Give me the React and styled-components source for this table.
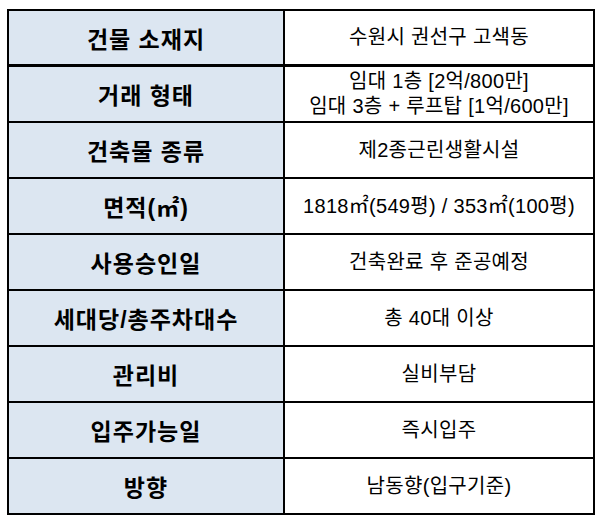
import React from "react";
import styled, { createGlobalStyle } from "styled-components";

const Global = createGlobalStyle`
  html, body { margin: 0; padding: 0; background: #ffffff; }
  body { font-family: "Liberation Sans", "Noto Sans CJK KR", sans-serif; color: #000; }
`;

const Page = styled.div`
  padding: 9px 0 0 7px;
`;

const Table = styled.div`
  display: grid;
  grid-template-columns: 274px 308px;
  grid-auto-rows: 54px;
  gap: 2px;
  padding: 2px;
  width: 584px;
  background: #000;
  & > :nth-child(-n + 2) { height: 53px; }
`;

const Head = styled.div`
  background: #dce6f1;
  display: flex;
  align-items: center;
  justify-content: center;
  font-weight: 700;
  font-size: 23px;
  letter-spacing: 1px;
`;

const Value = styled.div`
  background: #ffffff;
  display: flex;
  flex-direction: column;
  align-items: center;
  justify-content: center;
  font-size: 20px;
  line-height: 25px;
  letter-spacing: 0.3px;
  text-align: center;
`;

const rows = [
  ["건물 소재지", ["수원시 권선구 고색동"]],
  ["거래 형태", ["임대 1층 [2억/800만]", "임대 3층 + 루프탑 [1억/600만]"]],
  ["건축물 종류", ["제2종근린생활시설"]],
  ["면적(㎡)", ["1818㎡(549평) / 353㎡(100평)"]],
  ["사용승인일", ["건축완료 후 준공예정"]],
  ["세대당/총주차대수", ["총 40대 이상"]],
  ["관리비", ["실비부담"]],
  ["입주가능일", ["즉시입주"]],
  ["방향", ["남동향(입구기준)"]],
];

export default function App() {
  return (
    <>
      <Global />
      <Page>
        <Table>
          {rows.map(([h, v]) => (
            <React.Fragment key={h}>
              <Head>{h}</Head>
              <Value>
                {v.map((line) => (
                  <span key={line}>{line}</span>
                ))}
              </Value>
            </React.Fragment>
          ))}
        </Table>
      </Page>
    </>
  );
}
